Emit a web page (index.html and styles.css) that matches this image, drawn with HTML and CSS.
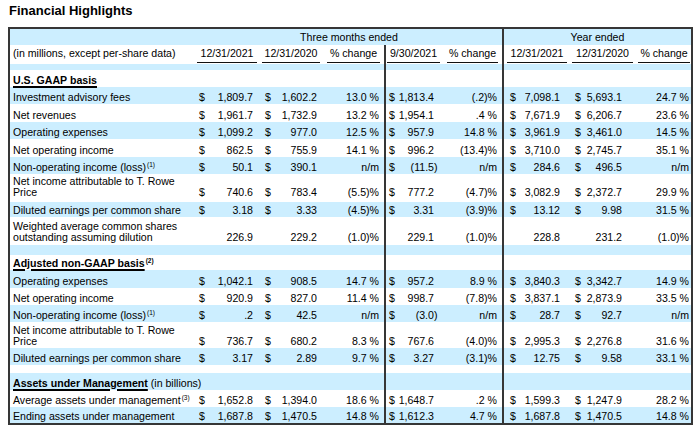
FILE: index.html
```html
<!DOCTYPE html>
<html>
<head>
<meta charset="utf-8">
<title>Financial Highlights</title>
<link rel="stylesheet" href="styles.css">
</head>
<body>
<h1 class="title">Financial Highlights</h1>
<div class="tbl">
  <div class="row hd1 blue h16">
    <div class="q">Three months ended</div>
    <div class="y">Year ended</div>
  </div>
  <div class="row hd2 h19">
    <div><span>(in millions, except per-share data)</span></div>
    <div><span>12/31/2021</span></div>
    <div><span>12/31/2020</span></div>
    <div><span>% change</span></div>
    <div><span>9/30/2021</span></div>
    <div><span>% change</span></div>
    <div><span>12/31/2021</span></div>
    <div><span>12/31/2020</span></div>
    <div><span>% change</span></div>
  </div>
  <div class="row sp blue h6"><div></div><div></div><div></div></div>
  <div class="row sp h17"><div><span><span class="sec">U.S. GAAP basis</span></span></div><div></div><div></div></div>

  <div class="row data blue h17">
    <div><span>Investment advisory fees</span></div>
    <div><i>$</i>1,809.7</div><div><i>$</i>1,602.2</div><div>13.0 %</div>
    <div><i>$</i>1,813.4</div><div>(.2)%</div>
    <div><i>$</i>7,098.1</div><div><i>$</i>5,693.1</div><div>24.7 %</div>
  </div>
  <div class="row data h18">
    <div><span>Net revenues</span></div>
    <div><i>$</i>1,961.7</div><div><i>$</i>1,732.9</div><div>13.2 %</div>
    <div><i>$</i>1,954.1</div><div>.4 %</div>
    <div><i>$</i>7,671.9</div><div><i>$</i>6,206.7</div><div>23.6 %</div>
  </div>
  <div class="row data blue h17">
    <div><span>Operating expenses</span></div>
    <div><i>$</i>1,099.2</div><div><i>$</i>977.0</div><div>12.5 %</div>
    <div><i>$</i>957.9</div><div>14.8 %</div>
    <div><i>$</i>3,961.9</div><div><i>$</i>3,461.0</div><div>14.5 %</div>
  </div>
  <div class="row data h18">
    <div><span>Net operating income</span></div>
    <div><i>$</i>862.5</div><div><i>$</i>755.9</div><div>14.1 %</div>
    <div><i>$</i>996.2</div><div>(13.4)%</div>
    <div><i>$</i>3,710.0</div><div><i>$</i>2,745.7</div><div>35.1 %</div>
  </div>
  <div class="row data blue h17">
    <div><span>Non-operating income (loss)<sup class="fn">(1)</sup></span></div>
    <div><i>$</i>50.1</div><div><i>$</i>390.1</div><div>n/m</div>
    <div><i>$</i><span class="ng">(11.5)</span></div><div>n/m</div>
    <div><i>$</i>284.6</div><div><i>$</i>496.5</div><div>n/m</div>
  </div>
  <div class="row data h28 pb4">
    <div><span>Net income attributable to T. Rowe<br>Price</span></div>
    <div><i>$</i>740.6</div><div><i>$</i>783.4</div><div>(5.5)%</div>
    <div><i>$</i>777.2</div><div>(4.7)%</div>
    <div><i>$</i>3,082.9</div><div><i>$</i>2,372.7</div><div>29.9 %</div>
  </div>
  <div class="row data blue h15">
    <div><span>Diluted earnings per common share</span></div>
    <div><i>$</i>3.18</div><div><i>$</i>3.33</div><div>(4.5)%</div>
    <div><i>$</i>3.31</div><div>(3.9)%</div>
    <div><i>$</i>13.12</div><div><i>$</i>9.98</div><div>31.5 %</div>
  </div>
  <div class="row data h28 pb2">
    <div><span>Weighted average common shares<br>outstanding assuming dilution</span></div>
    <div>226.9</div><div>229.2</div><div>(1.0)%</div>
    <div>229.1</div><div>(1.0)%</div>
    <div>228.8</div><div>231.2</div><div>(1.0)%</div>
  </div>
  <div class="row sp blue h10"><div></div><div></div><div></div></div>
  <div class="row sp h15"><div><span><span class="sec">Adjusted non-GAAP basis</span><sup class="fn b">(2)</sup></span></div><div></div><div></div></div>

  <div class="row data blue h18">
    <div><span>Operating expenses</span></div>
    <div><i>$</i>1,042.1</div><div><i>$</i>908.5</div><div>14.7 %</div>
    <div><i>$</i>957.2</div><div>8.9 %</div>
    <div><i>$</i>3,840.3</div><div><i>$</i>3,342.7</div><div>14.9 %</div>
  </div>
  <div class="row data h17">
    <div><span>Net operating income</span></div>
    <div><i>$</i>920.9</div><div><i>$</i>827.0</div><div>11.4 %</div>
    <div><i>$</i>998.7</div><div>(7.8)%</div>
    <div><i>$</i>3,837.1</div><div><i>$</i>2,873.9</div><div>33.5 %</div>
  </div>
  <div class="row data blue h17">
    <div><span>Non-operating income (loss)<sup class="fn">(1)</sup></span></div>
    <div><i>$</i>.2</div><div><i>$</i>42.5</div><div>n/m</div>
    <div><i>$</i><span class="ng">(3.0)</span></div><div>n/m</div>
    <div><i>$</i>28.7</div><div><i>$</i>92.7</div><div>n/m</div>
  </div>
  <div class="row data h26">
    <div><span>Net income attributable to T. Rowe<br>Price</span></div>
    <div><i>$</i>736.7</div><div><i>$</i>680.2</div><div>8.3 %</div>
    <div><i>$</i>767.6</div><div>(4.0)%</div>
    <div><i>$</i>2,995.3</div><div><i>$</i>2,276.8</div><div>31.6 %</div>
  </div>
  <div class="row data blue h17">
    <div><span>Diluted earnings per common share</span></div>
    <div><i>$</i>3.17</div><div><i>$</i>2.89</div><div>9.7 %</div>
    <div><i>$</i>3.27</div><div>(3.1)%</div>
    <div><i>$</i>12.75</div><div><i>$</i>9.58</div><div>33.1 %</div>
  </div>
  <div class="row sp h8"><div></div><div></div><div></div></div>
  <div class="row sp blue h17"><div><span><span class="sec">Assets under Management</span> (in billions)</span></div><div></div><div></div></div>

  <div class="row data h17">
    <div><span>Average assets under management<sup class="fn">(3)</sup></span></div>
    <div><i>$</i>1,652.8</div><div><i>$</i>1,394.0</div><div>18.6 %</div>
    <div><i>$</i>1,648.7</div><div>.2 %</div>
    <div><i>$</i>1,599.3</div><div><i>$</i>1,247.9</div><div>28.2 %</div>
  </div>
  <div class="row data blue h16">
    <div><span>Ending assets under management</span></div>
    <div><i>$</i>1,687.8</div><div><i>$</i>1,470.5</div><div>14.8 %</div>
    <div><i>$</i>1,612.3</div><div>4.7 %</div>
    <div><i>$</i>1,687.8</div><div><i>$</i>1,470.5</div><div>14.8 %</div>
  </div>
</div>
</body>
</html>
```

FILE: styles.css
```css
* {
  box-sizing: border-box;
  margin: 0;
  padding: 0;
}

body {
  padding: 3px 0 0 8px;
  font-family: "Liberation Sans", Arial, sans-serif;
  color: #000;
  background: #fff;
}

.title {
  font-size: 13px;
  font-weight: bold;
  line-height: 16px;
  margin: 0 0 8px 1px;
}

.tbl {
  width: 685px;
  border: 2px solid #363636;
  font-size: 10.6px;
  line-height: 11px;
}

.row {
  display: grid;
  grid-template-columns: 186px 64px 62px 62px 58px 60px 68px 65px 56px;
  height: 17px;
}

.row > div {
  display: flex;
  align-items: flex-end;
  padding-bottom: 1.5px;
  white-space: nowrap;
}

.blue { background: #cceeff; }

.h6 { height: 6px; }
.h8 { height: 8px; }
.h10 { height: 10px; }
.h15 { height: 15px; }
.h16 { height: 16px; }
.h17 { height: 17px; }
.h18 { height: 18px; }
.h19 { height: 19px; }
.h26 { height: 26px; }
.h28 { height: 28px; }

.pb4 > div { padding-bottom: 4px; }
.pb2 > div { padding-bottom: 2px; }

/* header row 1 */
.hd1 > div {
  align-items: center;
  justify-content: center;
  padding-bottom: 0;
}
.hd1 .q { grid-column: 2 / 7; }
.hd1 .y {
  grid-column: 7 / 10;
  border-left: 2px solid #363636;
}

/* header row 2 */
.hd2 > div { padding-bottom: 1px; }
.hd2 > div > span {
  flex: 1;
  text-align: center;
  border-bottom: 1px solid #111;
  padding-bottom: 3px;
}
.hd2 > div:nth-child(1) { padding-left: 3px; }
.hd2 > div:nth-child(1) > span {
  text-align: left;
  border-bottom: none;
  padding-bottom: 4px;
}
.hd2 > div:nth-child(2) { padding-left: 1px; padding-right: 3px; }
.hd2 > div:nth-child(3) { padding-left: 2px; padding-right: 2px; }
.hd2 > div:nth-child(4) { padding-left: 5px; padding-right: 4px; }
.hd2 > div:nth-child(5) { padding-left: 1px; padding-right: 2px; }
.hd2 > div:nth-child(6) { padding-left: 5px; padding-right: 4px; }
.hd2 > div:nth-child(7) { padding-left: 3px; padding-right: 3px; }
.hd2 > div:nth-child(8) { padding-left: 2px; padding-right: 2px; }
.hd2 > div:nth-child(9) { padding-left: 3px; padding-right: 1px; }

.hd2 > div:nth-child(5),
.hd2 > div:nth-child(7),
.data > div:nth-child(5),
.data > div:nth-child(7),
.sp > div:nth-child(2),
.sp > div:nth-child(3) {
  border-left: 2px solid #363636;
}

/* spacer / section rows */
.sp > div:nth-child(1) {
  grid-column: 1 / 5;
  padding-left: 3px;
}
.sp > div:nth-child(2) { grid-column: 5 / 7; }
.sp > div:nth-child(3) { grid-column: 7 / 10; }

.sec {
  font-weight: bold;
  text-decoration: underline;
  text-decoration-thickness: 1.5px;
  text-underline-offset: 2px;
}

/* data rows */
.data > div:nth-child(1) { padding-left: 3px; }
.data > div:not(:first-child) { justify-content: flex-end; }
.data > div:nth-child(2) { padding-left: 3px; padding-right: 7px; }
.data > div:nth-child(3) { padding-left: 5px; padding-right: 5px; }
.data > div:nth-child(4) { padding-right: 5px; }
.data > div:nth-child(5) { padding-left: 3px; padding-right: 8px; }
.data > div:nth-child(6) { padding-right: 5px; }
.data > div:nth-child(7) { padding-left: 6px; padding-right: 10px; }
.data > div:nth-child(8) { padding-left: 5px; padding-right: 13px; }
.data > div:nth-child(9) { padding-right: 2px; }

.data i {
  font-style: normal;
  margin-right: auto;
}

.ng { margin-right: -3.5px; }

.fn {
  font-size: 6.5px;
  line-height: 0;
  vertical-align: 4px;
  margin-left: 1px;
}
.fn.b { font-weight: bold; }
```
